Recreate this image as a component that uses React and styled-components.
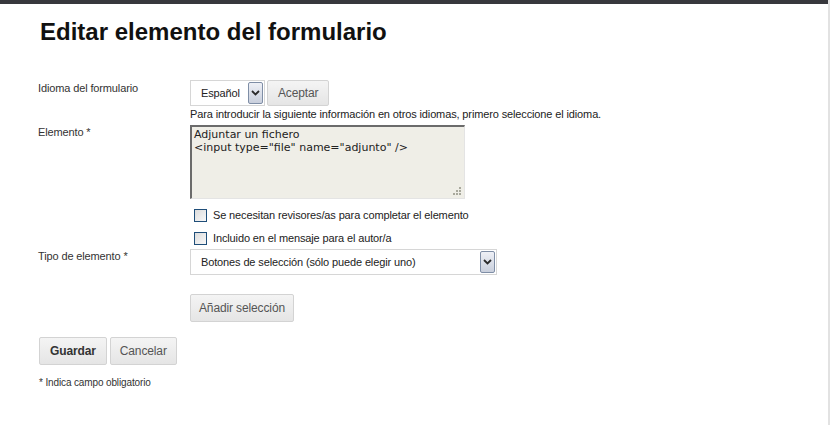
import React from 'react';
import styled, { createGlobalStyle } from 'styled-components';

const GlobalStyle = createGlobalStyle`
  html, body {
    margin: 0;
    padding: 0;
    background: #ffffff;
  }
  body {
    font-family: "Liberation Sans", Arial, sans-serif;
    font-size: 11px;
    letter-spacing: -0.13px;
    color: #333333;
  }
`;

const Frame = styled.div`
  width: 830px;
  height: 425px;
  box-sizing: border-box;
  border-right: 2px solid #e2e2e2;
`;

const TopBar = styled.div`
  height: 4px;
  background: #37383d;
`;

const Content = styled.div`
  padding: 0 0 0 38px;
`;

const Title = styled.h1`
  margin: 0;
  padding: 14px 0 0 2px;
  font-size: 24px;
  font-weight: bold;
  letter-spacing: 0;
  color: #111111;
  line-height: 28px;
`;

const Form = styled.div`
  margin-top: 34px;
  display: flex;
  flex-direction: column;
`;

const Row = styled.div`
  display: flex;
  align-items: flex-start;
  margin-top: ${(p) => p.$top || 0}px;
`;

const Label = styled.div`
  width: 152px;
  flex-shrink: 0;
  padding-top: ${(p) => p.$pt || 0}px;
  line-height: 13px;
`;

const Field = styled.div`
  display: flex;
  flex-direction: column;
  align-items: flex-start;
`;

const Inline = styled.div`
  display: flex;
  align-items: center;
  gap: 2px;
`;

const SelectBox = styled.div`
  width: ${(p) => p.$w}px;
  height: 26px;
  box-sizing: border-box;
  border: 1px solid #d6d6d6;
  background: #ffffff;
  display: flex;
  align-items: center;
  justify-content: space-between;
  padding: 0 1px 0 10px;
  color: #222222;
`;

const ArrowBtn = styled.div`
  width: 15px;
  height: 22px;
  box-sizing: border-box;
  border: 1px solid #7f8ea6;
  border-radius: 2px;
  background: linear-gradient(#eef0f6, #c9cfdc);
  display: flex;
  align-items: center;
  justify-content: center;
`;

const Button = styled.button`
  font-family: "Liberation Sans", Arial, sans-serif;
  font-size: 12px;
  letter-spacing: -0.13px;
  font-weight: ${(p) => (p.$bold ? 'bold' : 'normal')};
  color: ${(p) => (p.$bold ? '#333333' : '#555555')};
  height: ${(p) => p.$h || 26}px;
  padding: 0 ${(p) => p.$px || 10}px;
  margin-top: ${(p) => p.$top || 0}px;
  border: 1px solid #d3d3d3;
  border-radius: 2px;
  background: linear-gradient(#f4f4f4, #e5e5e5);
  cursor: pointer;
`;

const Hint = styled.div`
  margin-top: 2px;
  line-height: 13px;
  color: #222222;
`;

const TextArea = styled.div`
  margin-top: 5px;
  width: 275px;
  height: 74px;
  box-sizing: border-box;
  border-top: 2px solid #6b6b6b;
  border-left: 2px solid #6b6b6b;
  border-right: 1px solid #e4e4e4;
  border-bottom: 1px solid #e4e4e4;
  background: #efeee7;
  padding: 1px 2px;
  font-family: "DejaVu Sans", Verdana, sans-serif;
  font-size: 11px;
  letter-spacing: 0;
  line-height: 13px;
  color: #222222;
  position: relative;
  white-space: pre;
`;

const Grip = styled.svg`
  position: absolute;
  right: 2px;
  bottom: 2px;
`;

const CheckRow = styled.label`
  display: flex;
  align-items: center;
  gap: 6px;
  margin-left: 4px;
  margin-top: ${(p) => p.$top}px;
  color: #222222;
  line-height: 13px;
`;

const Box = styled.span`
  width: 13px;
  height: 13px;
  box-sizing: border-box;
  border: 1px solid #1f4e79;
  background: linear-gradient(135deg, #dcdcdc, #f8f8f8);
  display: inline-block;
`;

const Footer = styled.div`
  margin-top: 15px;
  display: flex;
  gap: 3px;
  padding-left: 1px;
`;

const Note = styled.div`
  margin-top: 12px;
  padding-left: 1px;
  font-size: 10px;
  color: #333333;
`;

const Chevron = () => (
  <svg width="9" height="6" viewBox="0 0 9 6">
    <path d="M1 1 L4.5 4.5 L8 1" fill="none" stroke="#2b2b2b" strokeWidth="1.8" />
  </svg>
);

export default function App() {
  return (
    <Frame>
      <GlobalStyle />
      <TopBar />
      <Content>
        <Title>Editar elemento del formulario</Title>
        <Form>
          <Row>
            <Label $pt={2}>Idioma del formulario</Label>
            <Field>
              <Inline>
                <SelectBox $w={75}>
                  <span>Español</span>
                  <ArrowBtn>
                    <Chevron />
                  </ArrowBtn>
                </SelectBox>
                <Button $px={10}>Aceptar</Button>
              </Inline>
              <Hint>Para introducir la siguiente información en otros idiomas, primero seleccione el idioma.</Hint>
            </Field>
          </Row>
          <Row $top={-1}>
            <Label $pt={6}>Elemento *</Label>
            <Field>
              <TextArea>
                {'Adjuntar un fichero\n<input type="file" name="adjunto" />'}
                <Grip width="10" height="10" viewBox="0 0 10 10">
                  <rect x="7" y="1" width="2" height="2" fill="#a8a89c" />
                  <rect x="4" y="4" width="2" height="2" fill="#a8a89c" />
                  <rect x="7" y="4" width="2" height="2" fill="#a8a89c" />
                  <rect x="1" y="7" width="2" height="2" fill="#a8a89c" />
                  <rect x="4" y="7" width="2" height="2" fill="#a8a89c" />
                  <rect x="7" y="7" width="2" height="2" fill="#a8a89c" />
                </Grip>
              </TextArea>
              <CheckRow $top={10}>
                <Box />
                Se necesitan revisores/as para completar el elemento
              </CheckRow>
              <CheckRow $top={10}>
                <Box />
                Incluido en el mensaje para el autor/a
              </CheckRow>
            </Field>
          </Row>
          <Row $top={4}>
            <Label $pt={1}>Tipo de elemento *</Label>
            <Field>
              <SelectBox $w={307}>
                <span>Botones de selección (sólo puede elegir uno)</span>
                <ArrowBtn>
                  <Chevron />
                </ArrowBtn>
              </SelectBox>
              <Button $h={28} $px={8} $top={19}>Añadir selección</Button>
            </Field>
          </Row>
          <Footer>
            <Button $bold $h={28} $px={10}>Guardar</Button>
            <Button $h={28} $px={9}>Cancelar</Button>
          </Footer>
          <Note>* Indica campo obligatorio</Note>
        </Form>
      </Content>
    </Frame>
  );
}
